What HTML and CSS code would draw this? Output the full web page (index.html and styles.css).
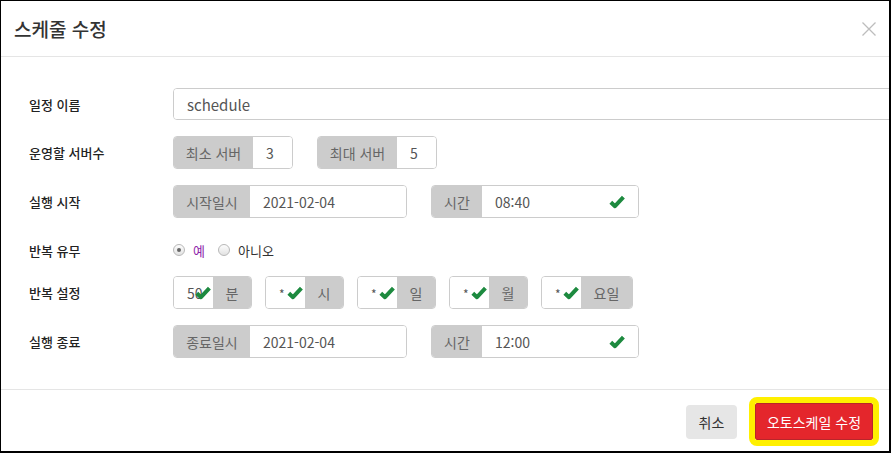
FILE: index.html
```html
<!DOCTYPE html>
<html lang="ko">
<head>
    <meta charset="UTF-8">
    <meta name="viewport" content="width=device-width, initial-scale=1.0">
    <title>스케줄 수정</title>
    <link rel="stylesheet" href="styles.css">
</head>
<body>
    <div class="modal">
        <div class="modal-header">
            <h4 class="modal-title">스케줄 수정</h4>
            <button class="close" type="button">
                <svg width="14" height="14" viewBox="0 0 14 14"><path d="M0.5 0.5 L13.5 13.5 M13.5 0.5 L0.5 13.5" stroke="#bdbdbd" stroke-width="1.3" fill="none"/></svg>
            </button>
        </div>

        <div class="modal-body">
            <div class="form-row first">
                <label class="form-label">일정 이름</label>
                <div class="input-group name-group">
                    <div class="input-box name-box">schedule</div>
                </div>
            </div>

            <div class="form-row">
                <label class="form-label">운영할 서버수</label>
                <div class="input-group">
                    <span class="addon w80">최소 서버</span>
                    <div class="input-box w40">3</div>
                </div>
                <div class="input-group gap-lg">
                    <span class="addon w80">최대 서버</span>
                    <div class="input-box w40">5</div>
                </div>
            </div>

            <div class="form-row">
                <label class="form-label">실행 시작</label>
                <div class="input-group">
                    <span class="addon w77">시작일시</span>
                    <div class="input-box w157">2021-02-04</div>
                </div>
                <div class="input-group gap-lg">
                    <span class="addon w51">시간</span>
                    <div class="input-box w157">08:40
                        <svg class="check check-time" viewBox="0 0 16 14"><path d="M1.8 7.2 L6 11.2 L14.4 2.2" stroke="#1d8a3f" stroke-width="4" fill="none" stroke-linejoin="round"/></svg>
                    </div>
                </div>
            </div>

            <div class="form-row radio-row">
                <label class="form-label">반복 유무</label>
                <div class="radio-group">
                    <span class="radio checked"></span><span class="radio-text on">예</span>
                    <span class="radio"></span><span class="radio-text">아니오</span>
                </div>
            </div>

            <div class="form-row">
                <label class="form-label">반복 설정</label>
                <div class="input-group">
                    <div class="input-box w40">50
                        <svg class="check check-small" viewBox="0 0 16 14"><path d="M1.8 7.2 L6 11.2 L14.4 2.2" stroke="#1d8a3f" stroke-width="4" fill="none" stroke-linejoin="round"/></svg>
                    </div>
                    <span class="addon w39">분</span>
                </div>
                <div class="input-group gap-sm">
                    <div class="input-box w40 star">*
                        <svg class="check check-small" viewBox="0 0 16 14"><path d="M1.8 7.2 L6 11.2 L14.4 2.2" stroke="#1d8a3f" stroke-width="4" fill="none" stroke-linejoin="round"/></svg>
                    </div>
                    <span class="addon w39">시</span>
                </div>
                <div class="input-group gap-sm">
                    <div class="input-box w40 star">*
                        <svg class="check check-small" viewBox="0 0 16 14"><path d="M1.8 7.2 L6 11.2 L14.4 2.2" stroke="#1d8a3f" stroke-width="4" fill="none" stroke-linejoin="round"/></svg>
                    </div>
                    <span class="addon w39">일</span>
                </div>
                <div class="input-group gap-sm">
                    <div class="input-box w40 star">*
                        <svg class="check check-small" viewBox="0 0 16 14"><path d="M1.8 7.2 L6 11.2 L14.4 2.2" stroke="#1d8a3f" stroke-width="4" fill="none" stroke-linejoin="round"/></svg>
                    </div>
                    <span class="addon w39">월</span>
                </div>
                <div class="input-group gap-sm">
                    <div class="input-box w40 star">*
                        <svg class="check check-small" viewBox="0 0 16 14"><path d="M1.8 7.2 L6 11.2 L14.4 2.2" stroke="#1d8a3f" stroke-width="4" fill="none" stroke-linejoin="round"/></svg>
                    </div>
                    <span class="addon w52">요일</span>
                </div>
            </div>

            <div class="form-row">
                <label class="form-label">실행 종료</label>
                <div class="input-group">
                    <span class="addon w77">종료일시</span>
                    <div class="input-box w157">2021-02-04</div>
                </div>
                <div class="input-group gap-lg">
                    <span class="addon w51">시간</span>
                    <div class="input-box w157">12:00
                        <svg class="check check-time" viewBox="0 0 16 14"><path d="M1.8 7.2 L6 11.2 L14.4 2.2" stroke="#1d8a3f" stroke-width="4" fill="none" stroke-linejoin="round"/></svg>
                    </div>
                </div>
            </div>
        </div>

        <div class="modal-footer">
            <button class="btn btn-default" type="button">취소</button>
            <button class="btn btn-primary" type="button">오토스케일 수정</button>
        </div>
    </div>
</body>
</html>
```

FILE: styles.css
```css
* {
    margin: 0;
    padding: 0;
    box-sizing: border-box;
}

html, body {
    height: 100%;
}

body {
    background: #000;
    padding: 1px 2px 2px 1px;
    font-family: "Noto Sans CJK KR", "Noto Sans", sans-serif;
    overflow: hidden;
}

.modal {
    background: #fff;
    height: 450px;
    overflow: hidden;
    display: flex;
    flex-direction: column;
}

.modal-header {
    height: 56px;
    flex-shrink: 0;
    border-bottom: 1px solid #e5e5e5;
    display: flex;
    align-items: center;
    justify-content: space-between;
    padding: 0 13px;
}

.modal-title {
    font-size: 19px;
    font-weight: 500;
    color: #333;
    line-height: 1;
}

.close {
    background: none;
    border: none;
    width: 14px;
    height: 14px;
    display: flex;
}

.modal-body {
    padding: 31px 0 31px 28px;
    flex-shrink: 0;
}

.form-row {
    display: flex;
    align-items: center;
    height: 33px;
    margin-bottom: 16px;
}

.form-row.first {
    height: 32px;
}

.form-row.radio-row {
    height: 32px;
    margin-bottom: 10px;
}

.form-row:last-child {
    margin-bottom: 0;
}

.form-label {
    width: 144px;
    flex-shrink: 0;
    font-size: 13px;
    font-weight: 500;
    color: #222;
}

.input-group {
    display: flex;
    height: 100%;
    border: 1px solid #ccc;
    border-radius: 4px;
    overflow: hidden;
    flex-shrink: 0;
}

.gap-lg {
    margin-left: 24px;
}

.gap-sm {
    margin-left: 13px;
}

.addon {
    background: #ccc;
    color: #666;
    font-size: 14px;
    display: flex;
    align-items: center;
    justify-content: center;
}

.w80 { width: 79px; }
.w77 { width: 76px; }
.w51 { width: 50px; }
.w39 { width: 38px; }
.w52 { width: 51px; }

.input-box {
    position: relative;
    display: flex;
    align-items: center;
    padding: 0 13px;
    font-size: 14px;
    color: #555;
    background: #fff;
}

.w40 { width: 39px; }
.w157 { width: 156px; }

.name-group {
    width: 760px;
}

.name-box {
    width: 100%;
    font-size: 15px;
}

.star {
    font-size: 12px;
    align-items: flex-start;
    padding-top: 8px;
}

.check {
    position: absolute;
    top: 50%;
    width: 16px;
    height: 14px;
    transform: translateY(-50%);
}

.check-time {
    right: 13px;
}

.check-small {
    right: 2px;
}

.radio-group {
    display: flex;
    align-items: center;
    font-size: 13px;
    color: #333;
}

.radio {
    width: 12px;
    height: 12px;
    border-radius: 50%;
    border: 1px solid #b8b8b8;
    background: linear-gradient(#fdfdfd, #e2e2e2);
    margin-right: 8px;
    position: relative;
}

.radio.checked::after {
    content: "";
    position: absolute;
    left: 3px;
    top: 3px;
    width: 4px;
    height: 4px;
    border-radius: 50%;
    background: #666;
}

.radio-text {
    margin-right: 13px;
}

.radio-text.on {
    color: #8e24aa;
}

.modal-footer {
    flex: 1;
    border-top: 1px solid #e5e5e5;
    display: flex;
    justify-content: flex-end;
    align-items: center;
    padding: 2px 16px 0 0;
}

.btn {
    font-family: inherit;
    font-size: 14px;
    height: 34px;
    border-radius: 4px;
    cursor: pointer;
}

.btn-default {
    width: 51px;
    background: #e6e6e6;
    color: #333;
    border: none;
}

.btn-primary {
    width: 118px;
    height: 37px;
    margin-left: 18px;
    background: #e4262c;
    color: #fff;
    border: 1px solid #b8262a;
    border-radius: 2px;
    outline: 6px solid #fff000;
}
```
